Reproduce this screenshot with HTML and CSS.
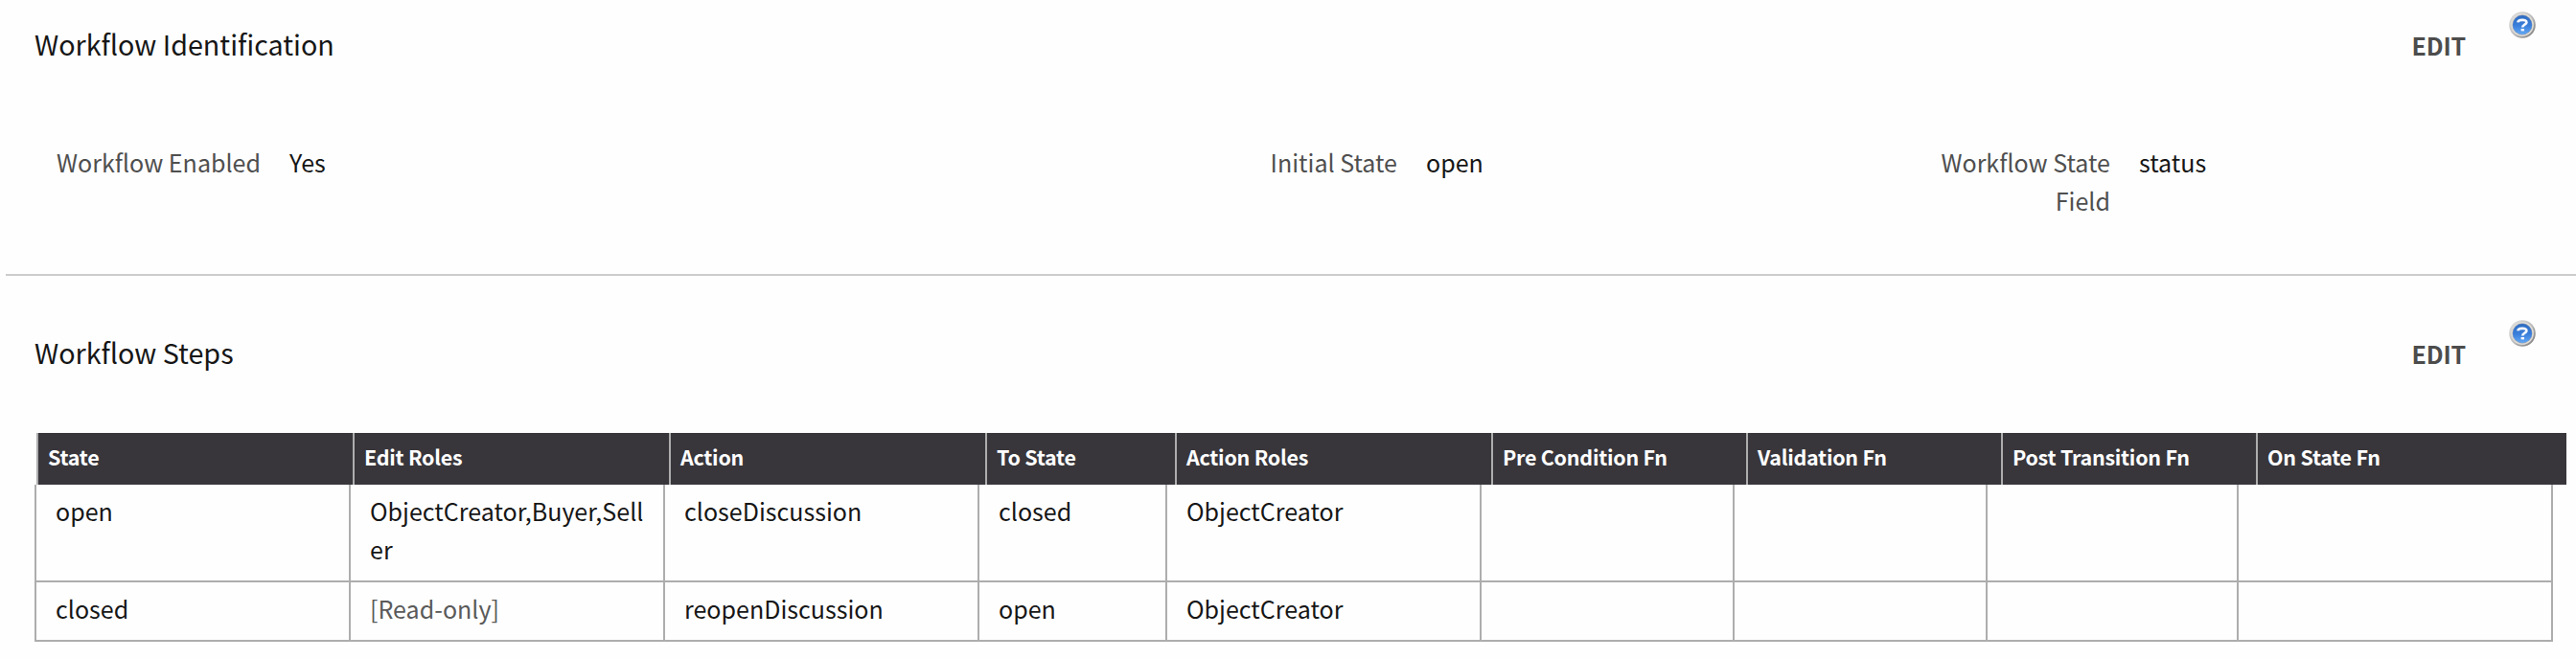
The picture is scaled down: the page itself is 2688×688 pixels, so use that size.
FILE: index.html
```html
<!DOCTYPE html>
<html lang="en">
<head>
  <meta charset="UTF-8">
  <meta name="viewport" content="width=device-width, initial-scale=1">
  <title>Workflow</title>
  <link rel="stylesheet" href="styles.css">
</head>
<body>
<svg class="defs" width="0" height="0" aria-hidden="true">
  <defs>
    <linearGradient id="ring" x1="0" y1="0" x2="1" y2="1">
      <stop offset="0" stop-color="#e6e6e6"/>
      <stop offset="0.5" stop-color="#bdbdbd"/>
      <stop offset="1" stop-color="#747474"/>
    </linearGradient>
    <linearGradient id="ball" x1="0" y1="0" x2="0" y2="1">
      <stop offset="0" stop-color="#2f6cc0"/>
      <stop offset="0.55" stop-color="#3a7fdc"/>
      <stop offset="1" stop-color="#62a8f4"/>
    </linearGradient>
    <symbol id="help" viewBox="0 0 28 28">
      <circle cx="14" cy="14" r="13.8" fill="url(#ring)"/>
      <circle cx="14" cy="14" r="11.9" fill="#dedbd6"/>
      <circle cx="14" cy="14" r="10.4" fill="#8c9bb4"/>
      <circle cx="14" cy="14" r="10" fill="url(#ball)"/>
      <path d="M9.4 11.4 C9.6 8.2 18.6 7.8 18.4 11.3 C18.3 13.8 14.2 13.4 14.2 16.6" fill="none" stroke="#f4f8ff" stroke-width="2.7"/>
      <rect x="12.6" y="18" width="3.4" height="2.4" fill="#f4f8ff"/>
    </symbol>
  </defs>
</svg>
<section class="identification">
  <header>
    <h2>Workflow Identification</h2>
    <a class="edit">EDIT</a>
    <svg class="help"><use href="#help"/></svg>
  </header>
  <dl class="fields">
    <dt>Workflow Enabled</dt>
    <dd>Yes</dd>
    <dt>Initial State</dt>
    <dd>open</dd>
    <dt>Workflow State Field</dt>
    <dd>status</dd>
  </dl>
</section>
<section class="steps">
  <header>
    <h2>Workflow Steps</h2>
    <a class="edit">EDIT</a>
    <svg class="help"><use href="#help"/></svg>
  </header>
  <div class="grid-head">
    <div>State</div>
    <div>Edit Roles</div>
    <div>Action</div>
    <div>To State</div>
    <div>Action Roles</div>
    <div>Pre Condition Fn</div>
    <div>Validation Fn</div>
    <div>Post Transition Fn</div>
    <div>On State Fn</div>
  </div>
  <div class="grid-body">
    <div class="row">
      <div>open</div>
      <div>ObjectCreator,Buyer,Seller</div>
      <div>closeDiscussion</div>
      <div>closed</div>
      <div>ObjectCreator</div>
      <div></div>
      <div></div>
      <div></div>
      <div></div>
    </div>
    <div class="row">
      <div>closed</div>
      <div class="readonly">[Read-only]</div>
      <div>reopenDiscussion</div>
      <div>open</div>
      <div>ObjectCreator</div>
      <div></div>
      <div></div>
      <div></div>
      <div></div>
    </div>
  </div>
</section>
</body>
</html>
```
FILE: styles.css
```css
:root {
  --text-color: #161616;
  --label-color: #4f4f4f;
  --head-bg: #38363b;
  --line: #adadad;
}
* { box-sizing: border-box; margin: 0; padding: 0; }
body {
  font-family: "Noto Sans CJK SC", "Noto Sans", sans-serif;
  font-size: 25.06px;
  line-height: 40px;
  color: var(--text-color);
  background: #fefefe;
}
.defs { display: block; }
section { padding-left: 30px; margin-left: 6px; }
header {
  display: flex;
  align-items: flex-start;
  padding-right: 42px;
}
h2 {
  flex: 1;
  font-size: 28.7px;
  font-weight: 400;
  padding-top: 26px;
}
.edit {
  color: #4c4c4c;
  font-weight: 600;
  letter-spacing: -0.2px;
  padding-top: 27px;
  margin-right: 45px;
}
.help {
  width: 28px;
  height: 28px;
  margin-top: 12px;
}
.identification {
  height: 288px;
  border-bottom: 2px solid #ccc;
}
.fields {
  display: grid;
  grid-template-columns: 236px 1034px 152px 550px 194px auto;
  padding-top: 82px;
}
.fields dt {
  color: var(--label-color);
  text-align: right;
}
.fields dd { padding-left: 30px; }
.steps { padding-top: 34px; }
.steps header { height: 130px; }
.grid-head {
  display: grid;
  grid-template-columns: 330px 330px 330px 198px 330px 266px 266px 266px 324px;
  margin-left: 2px;
  width: 2640px;
  height: 54px;
  color: #fff;
  font-size: 21.48px;
  font-weight: 600;
  letter-spacing: -0.25px;
  line-height: 50px;
}
.grid-head div {
  background: var(--head-bg);
  border-left: 2px solid var(--line);
  padding-left: 10px;
}
.grid-body {
  width: 2628px;
  border-right: 2px solid var(--line);
}
.row {
  display: grid;
  grid-template-columns: 328px 328px 328px 196px 328px 264px 264px 262px 328px;
  border-bottom: 2px solid var(--line);
}
.row div {
  border-left: 2px solid var(--line);
  padding: 7px 18px 13px 20px;
  word-break: break-all;
}
.row .readonly { color: #5a5a5a; }
```
